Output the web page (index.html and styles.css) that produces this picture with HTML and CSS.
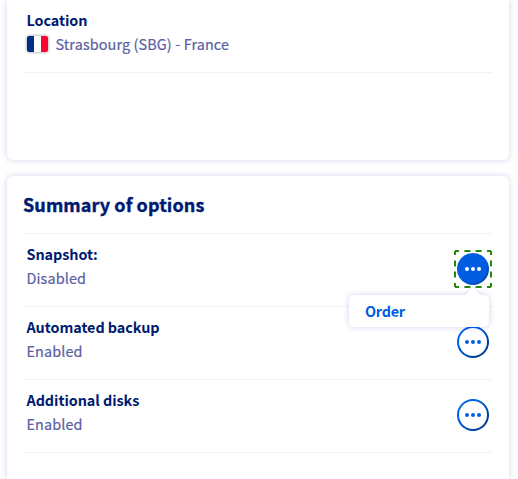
FILE: index.html
```html
<!DOCTYPE html>
<html lang="en">
<head>
<meta charset="utf-8">
<title>Summary of options</title>
<link rel="stylesheet" href="styles.css">
</head>
<body>
<main class="page">
  <section class="card card-location">
    <dl class="tile">
      <div class="text">
        <dt>Location</dt>
        <dd class="place">
          <svg class="flag" width="21" height="16" viewBox="0 0 21 16" aria-hidden="true"><path fill="#002d8c" d="M0 0h7v16H0z"/><path fill="#fff" d="M7 0h7v16H7z"/><path fill="#ff0032" d="M14 0h7v16h-7z"/></svg>
          <span>Strasbourg (SBG) - France</span>
        </dd>
      </div>
    </dl>
  </section>
  <section class="card card-options">
    <h2>Summary of options</h2>
    <dl class="tile">
      <div class="text"><dt>Snapshot:</dt><dd>Disabled</dd></div>
      <div class="action">
        <button class="more active" aria-label="Actions"><svg width="16" height="4" viewBox="0 0 16 4"><circle cx="2" cy="2" r="2"/><circle cx="8" cy="2" r="2"/><circle cx="14" cy="2" r="2"/></svg></button>
        <svg class="focus" width="38" height="38" viewBox="0 0 38 38" aria-hidden="true"><path d="M1 1H37V37H1Z" fill="none" stroke="#268a08" stroke-width="2" stroke-linejoin="round" stroke-dasharray="4 5.4 6 5.2 6 5.4 4 0"/></svg>
        <div class="menu">
          <svg class="arrow" width="20" height="10" viewBox="0 0 20 10"><path d="M1 10 10 1l9 9z"/></svg>
          <a>Order</a>
        </div>
      </div>
    </dl>
    <dl class="tile">
      <div class="text"><dt>Automated backup</dt><dd>Enabled</dd></div>
      <div class="action">
        <button class="more" aria-label="Actions"><svg width="16" height="4" viewBox="0 0 16 4"><circle cx="2" cy="2" r="2"/><circle cx="8" cy="2" r="2"/><circle cx="14" cy="2" r="2"/></svg></button>
      </div>
    </dl>
    <dl class="tile">
      <div class="text"><dt>Additional disks</dt><dd>Enabled</dd></div>
      <div class="action">
        <button class="more" aria-label="Actions"><svg width="16" height="4" viewBox="0 0 16 4"><circle cx="2" cy="2" r="2"/><circle cx="8" cy="2" r="2"/><circle cx="14" cy="2" r="2"/></svg></button>
      </div>
    </dl>
  </section>
</main>
</body>
</html>
```
FILE: styles.css
```css
* { box-sizing: border-box; }
body {
  margin: 0;
  background: #fff;
  font: 14.4px/24px "Noto Sans CJK SC", "Noto Sans", sans-serif;
  color: #5a60a2;
}
dl, dd, h2 { margin: 0; }
.page {
  display: flex;
  flex-direction: column;
  gap: 16px;
  height: 479px;
  overflow: hidden;
  padding: 0 9px 0 7px;
}
.card {
  padding: 0 16px;
  background: #fff;
  box-shadow: 0 0 6px rgba(0, 0, 180, 0.18);
}
.card-location { height: 160px; border-radius: 0 0 6px 6px; }
.card-options { height: 303px; border-radius: 6px 6px 0 0; }
.card-options h2 {
  height: 58px;
  border-bottom: 1px solid #f2f2f3;
  font-size: 18px;
  font-weight: 700;
  letter-spacing: 0.1px;
  line-height: 56px;
  color: #001a70;
  -webkit-text-stroke: 0.4px #001a70;
}
.tile {
  display: flex;
  justify-content: space-between;
  height: 73px;
  padding: 8px 4px 0 4px;
  border-bottom: 1px solid #f2f2f3;
}
.text { margin-left: -0.5px; }
dt { font-weight: 700; letter-spacing: -0.06px; color: #001a70; }
dd { letter-spacing: 0.12px; -webkit-text-stroke: 0.2px #5a60a2; }
.place { display: flex; align-items: center; gap: 8px; }
.flag { border-radius: 2px; box-shadow: 0 0 3px rgba(0, 0, 0, 0.5); }
.action { position: relative; padding-top: 11px; }
.focus { position: absolute; top: 8px; left: -3px; }
.more {
  display: flex;
  align-items: center;
  justify-content: center;
  width: 32px;
  height: 32px;
  padding: 0;
  border: 2px solid transparent;
  border-radius: 50%;
  background: linear-gradient(#fff, #fff) padding-box, linear-gradient(135deg, #0060e8 30%, #003078) border-box;
  fill: #0060df;
}
.more.active {
  background: linear-gradient(#005ce0, #005ce0) padding-box, linear-gradient(135deg, #005ce0 55%, #003c91) border-box;
  fill: #fff;
}
.menu {
  position: absolute;
  top: 53px;
  right: 0;
  z-index: 1;
  width: 140px;
  height: 32px;
  padding-left: 16px;
  border-radius: 5px;
  background: #fff;
  box-shadow: 0 0 6px rgba(0, 0, 180, 0.18);
  font-weight: 700;
  letter-spacing: -0.25px;
  line-height: 32px;
  color: #005ce0;
}
.arrow { position: absolute; top: -9px; right: 6px; fill: #fff; filter: drop-shadow(0 -1px 1px rgba(0, 0, 180, 0.12)); }
```
